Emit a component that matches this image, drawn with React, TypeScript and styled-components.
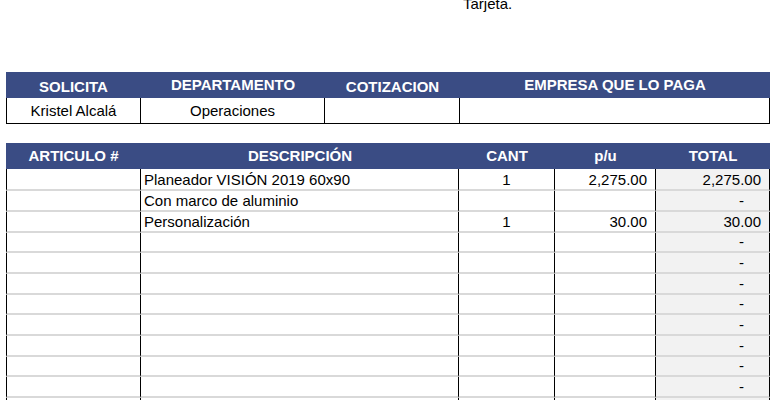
import React from 'react';
import styled, { createGlobalStyle } from 'styled-components';

const GlobalStyle = createGlobalStyle`
  html, body {
    margin: 0;
    padding: 0;
    background: #ffffff;
  }
  body {
    font-family: 'Liberation Sans', Arial, sans-serif;
    color: #000000;
    overflow: hidden;
  }
`;

const Sheet = styled.div`
  width: 777px;
  height: 400px;
  padding: 0 7px 0 6px;
  box-sizing: border-box;
  overflow: hidden;
`;

const TopNote = styled.div`
  height: 72px;
  overflow: hidden;
`;

const NoteText = styled.div`
  margin-top: -5px;
  padding-left: 457px;
  font-size: 15px;
  line-height: 17px;
`;

const HeaderRow = styled.div<{ $cols: string }>`
  display: grid;
  grid-template-columns: ${(p) => p.$cols};
  height: 26px;
  background: #3a4c84;
`;

const HeadCell = styled.div<{ $low?: boolean }>`
  color: #ffffff;
  font-weight: bold;
  font-size: 15px;
  line-height: 26px;
  text-align: center;
  white-space: nowrap;
  padding-top: ${(p) => (p.$low ? '2px' : '0')};
  box-sizing: border-box;
`;

const InfoRow = styled.div`
  display: grid;
  grid-template-columns: 135px 184px 135px 310px;
  height: 26px;
  border-bottom: 1px solid #000;
  box-sizing: border-box;
`;

const InfoCell = styled.div`
  font-size: 15px;
  line-height: 25px;
  text-align: center;
  border-right: 1px solid #000;
  white-space: nowrap;
  &:first-child {
    border-left: 1px solid #000;
  }
`;

const Spacer = styled.div`
  height: 19px;
`;

const ItemRow = styled.div<{ $first?: boolean }>`
  display: grid;
  grid-template-columns: 135px 318px 96px 101px 114px;
  height: ${(p) => (p.$first ? '22.3px' : '20.67px')};
`;

const ItemCell = styled.div<{ $align?: string; $shade?: boolean; $pad?: number }>`
  font-size: 15px;
  display: flex;
  align-items: center;
  justify-content: ${(p) => p.$align || 'flex-start'};
  padding: 0 ${(p) => (p.$pad !== undefined ? p.$pad : 8)}px 0 3px;
  border-right: 1px solid #000;
  border-bottom: 2px solid #d9d9d9;
  background: ${(p) => (p.$shade ? '#f2f2f2' : 'transparent')};
  white-space: nowrap;
  overflow: hidden;
  &:first-child {
    border-left: 1px solid #000;
  }
`;

type Item = { desc?: string; qty?: string; price?: string; total?: string };

const items: Item[] = [
  { desc: 'Planeador VISIÓN 2019 60x90', qty: '1', price: '2,275.00', total: '2,275.00' },
  { desc: 'Con marco de aluminio' },
  { desc: 'Personalización', qty: '1', price: '30.00', total: '30.00' },
  {}, {}, {}, {}, {}, {}, {}, {}, {},
];

const App: React.FunctionComponent = (): JSX.Element => {
  return (
    <>
      <GlobalStyle />
      <Sheet>
        <TopNote>
          <NoteText>Tarjeta.</NoteText>
        </TopNote>

        <HeaderRow $cols='135px 184px 135px 310px'>
          <HeadCell $low>SOLICITA</HeadCell>
          <HeadCell>DEPARTAMENTO</HeadCell>
          <HeadCell $low>COTIZACION</HeadCell>
          <HeadCell>EMPRESA QUE LO PAGA</HeadCell>
        </HeaderRow>
        <InfoRow>
          <InfoCell>Kristel Alcalá</InfoCell>
          <InfoCell>Operaciones</InfoCell>
          <InfoCell />
          <InfoCell />
        </InfoRow>

        <Spacer />

        <HeaderRow $cols='135px 318px 96px 101px 114px'>
          <HeadCell>ARTICULO #</HeadCell>
          <HeadCell>DESCRIPCIÓN</HeadCell>
          <HeadCell>CANT</HeadCell>
          <HeadCell>p/u</HeadCell>
          <HeadCell>TOTAL</HeadCell>
        </HeaderRow>
        {items.map((it, i) => (
          <ItemRow key={i} $first={i === 0}>
            <ItemCell />
            <ItemCell>{it.desc}</ItemCell>
            <ItemCell $align='center' $pad={3}>{it.qty}</ItemCell>
            <ItemCell $align='flex-end'>{it.price}</ItemCell>
            <ItemCell $align='flex-end' $shade $pad={it.total ? 8 : 25}>
              {it.total || '-'}
            </ItemCell>
          </ItemRow>
        ))}
      </Sheet>
    </>
  );
};

export default App;
